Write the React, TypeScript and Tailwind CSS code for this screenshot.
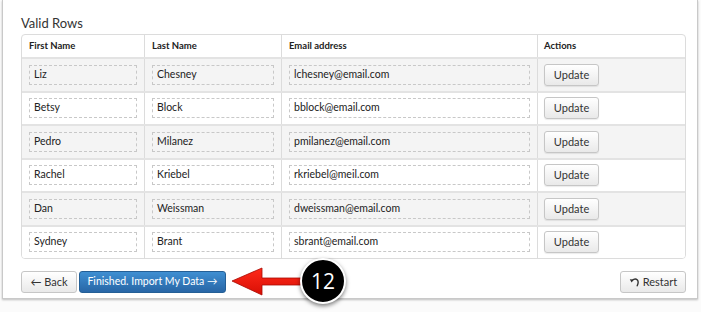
type Person = { first: string; last: string; email: string };

const people: Person[] = [
  { first: 'Liz', last: 'Chesney', email: 'lchesney@email.com' },
  { first: 'Betsy', last: 'Block', email: 'bblock@email.com' },
  { first: 'Pedro', last: 'Milanez', email: 'pmilanez@email.com' },
  { first: 'Rachel', last: 'Kriebel', email: 'rkriebel@meil.com' },
  { first: 'Dan', last: 'Weissman', email: 'dweissman@email.com' },
  { first: 'Sydney', last: 'Brant', email: 'sbrant@email.com' },
];

const cols = 'grid grid-cols-[123px_137px_256px_1fr]';

function Field({ value }: { value: string }) {
  return (
    <div className="flex h-[20px] items-center border border-dashed border-[#c8c8c8] px-[4px] text-[10.5px] text-[#222]">
      {value}
    </div>
  );
}

export default function App() {
  return (
    <div className="relative h-[312px] w-[701px] overflow-hidden bg-[#fbfbfb] font-['Lato',_'Open_Sans',_sans-serif]">
      <div className="ml-[2px] h-[299px] w-[696px] border border-t-0 border-[#c9c9c9] bg-white pl-[18px] pr-[11px] pt-[15px] shadow-[0_1px_2px_rgba(0,0,0,0.25)]">
        <h3 className="text-[13px] leading-[17px] text-[#333]">Valid Rows</h3>

        <div className="mt-[2px] overflow-hidden rounded-[4px] border border-[#dcdcdc]">
          <div className={`${cols} h-[22px] items-center text-[9.5px] font-bold text-[#222]`}>
            <div className="flex h-full items-center border-r border-[#dcdcdc] px-[7px]">First Name</div>
            <div className="flex h-full items-center border-r border-[#dcdcdc] px-[7px]">Last Name</div>
            <div className="flex h-full items-center border-r border-[#dcdcdc] px-[7px]">Email address</div>
            <div className="flex h-full items-center px-[6px]">Actions</div>
          </div>
          {people.map((p, i) => (
            <div
              key={p.email}
              className={`${cols} h-[33.5px] border-t-2 border-[#e3e3e3] ${i % 2 === 0 ? 'bg-[#f4f4f4]' : 'bg-white'}`}
            >
              <div className="flex items-center border-r border-[#dcdcdc] px-[7px]">
                <div className="w-full"><Field value={p.first} /></div>
              </div>
              <div className="flex items-center border-r border-[#dcdcdc] px-[7px]">
                <div className="w-full"><Field value={p.last} /></div>
              </div>
              <div className="flex items-center border-r border-[#dcdcdc] px-[7px]">
                <div className="w-full"><Field value={p.email} /></div>
              </div>
              <div className="flex items-center px-[6px]">
                <button
                  type="button"
                  className="h-[22px] w-[55px] rounded-[3px] border border-[#c6c6c6] bg-gradient-to-b from-white to-[#e9e9e9] text-[11px] text-[#333] shadow-[0_1px_1px_rgba(0,0,0,0.08)]"
                >
                  Update
                </button>
              </div>
            </div>
          ))}
        </div>

        <div className="mt-[12px] flex items-center">
          <button
            type="button"
            className="h-[22px] w-[56px] rounded-[3px] border border-[#c6c6c6] bg-gradient-to-b from-white to-[#e9e9e9] text-[11px] text-[#333]"
          >
            ← Back
          </button>
          <button
            type="button"
            className="ml-[2px] h-[22px] w-[147px] rounded-[3px] border border-[#245f96] bg-gradient-to-b from-[#3f8fd2] to-[#2866a6] text-[10.5px] text-white"
          >
            Finished. Import My Data →
          </button>
          <button
            type="button"
            className="ml-auto flex h-[22px] w-[66px] items-center justify-center gap-[3px] rounded-[3px] border border-[#c6c6c6] bg-gradient-to-b from-white to-[#e9e9e9] text-[11px] text-[#333]"
          >
            <svg width="11" height="10" viewBox="0 0 11 10">
              <path d="M3.2 3.6 Q6 0.8 8.4 3 Q10 5 8.2 8.8" fill="none" stroke="#333" strokeWidth="1.4" strokeLinecap="round" />
              <path d="M0.8 2.2 L4.6 2.4 L2.6 5.6 Z" fill="#333" />
            </svg>
            Restart
          </button>
        </div>
      </div>

      <svg className="absolute left-[228px] top-[264px]" width="80" height="36" viewBox="0 0 80 36">
        <defs>
          <linearGradient id="arr" x1="0" y1="0" x2="0" y2="1">
            <stop offset="0" stopColor="#ff2a1a" />
            <stop offset="1" stopColor="#d80f05" />
          </linearGradient>
        </defs>
        <path
          d="M4 17 L34 4 L34 14 L78 14 L78 21 L34 21 L34 31 Z"
          fill="url(#arr)"
          stroke="#a80a02"
          strokeWidth="0.8"
          strokeLinejoin="round"
        />
      </svg>

      <div className="absolute left-[300px] top-[258px] flex h-[46px] w-[46px] items-center justify-center rounded-full border-[2.5px] border-white bg-black shadow-[0_2px_4px_rgba(0,0,0,0.5)]">
        <span className="font-['Open_Sans',_sans-serif] text-[21px] leading-none text-white">12</span>
      </div>
    </div>
  );
}
